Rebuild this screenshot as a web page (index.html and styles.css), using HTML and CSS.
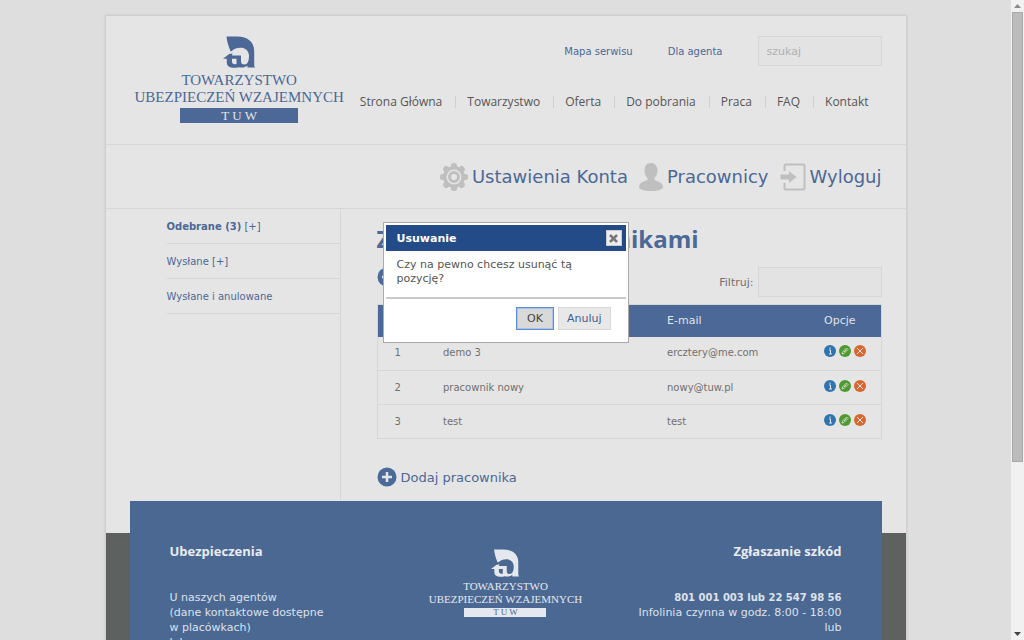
FILE: index.html
```html
<!DOCTYPE html>
<html lang="pl">
<head>
<meta charset="utf-8">
<title>Towarzystwo Ubezpieczeń Wzajemnych TUW</title>
<link rel="stylesheet" href="styles.css">
</head>
<body>
<svg class="defs" aria-hidden="true">
  <symbol id="mark" viewBox="0 0 32 32">
    <path d="M3.500 .5H14C25 .5 31.200 6 31.200 15V29.500L32 31.500H24.500L24.300 29.500C22 31.500 19 32 15.500 31.200C13 32 10 32 7 31.200C4.500 30.200 3.800 28.500 3.800 26V22.800H0L7.500 17V15C5.500 10.500 4 5.500 3.500 .5Z" fill="currentColor"/>
    <path class="mark-cut" d="M6.500 15.200H8.500C11 12.500 15 11.500 18.500 11.800C23.500 12.300 26 16 26 20C26 25 24.500 28.500 21.500 28.500C19 28.500 18 27.500 18 25V19.500H9L9.500 17.500L6.500 18ZM9 22.800H13.500V28C11 28.800 9 28 9 25.500Z"/>
  </symbol>
  <symbol id="plus" viewBox="0 0 20 20">
    <circle cx="10" cy="10" r="9.500" fill="#4b6a99"/><path d="M10 5V15M5 10H15" stroke="#e5e5e5" stroke-width="2.500"/>
  </symbol>
  <symbol id="info" viewBox="0 0 12 12">
    <circle cx="6" cy="6" r="6" fill="#2e75b0"/><path d="M5 5H6.500V9M5 9H8M6 2.500V4" stroke="#e5e5e5" fill="none"/>
  </symbol>
  <symbol id="edit" viewBox="0 0 12 12">
    <circle cx="6" cy="6" r="6" fill="#4e9a2e"/><path d="M3 9L3.500 7L7.500 3L9 4.500L5 8.500ZM5 7L7.500 4.500" stroke="#e5e5e5" stroke-width=".8" fill="none"/>
  </symbol>
  <symbol id="remove" viewBox="0 0 12 12">
    <circle cx="6" cy="6" r="6" fill="#d8662f"/><path d="M3 3L9 9M9 3L3 9" stroke="#e5e5e5" fill="none"/>
  </symbol>
</svg>
<div class="window">
  <div class="page">
    <div class="sheet">
      <header class="header">
        <a class="logo" href="#">
          <svg class="logo-mark"><use href="#mark"/></svg>
          <span class="logo-line">TOWARZYSTWO</span>
          <span class="logo-line">UBEZPIECZEŃ WZAJEMNYCH</span>
          <span class="logo-bar">T U W</span>
        </a>
        <div class="header-side">
          <div class="tools">
            <a href="#">Mapa serwisu</a>
            <a href="#">Dla agenta</a>
            <input class="field" type="text" placeholder="szukaj" aria-label="szukaj">
          </div>
          <nav class="nav">
            <a href="#">Strona Główna</a><a href="#">Towarzystwo</a><a href="#">Oferta</a><a href="#">Do pobrania</a><a href="#">Praca</a><a href="#">FAQ</a><a href="#">Kontakt</a>
          </nav>
        </div>
      </header>
      <nav class="account">
        <a href="#">
          <svg width="28" height="28" viewBox="0 0 28 28"><g fill="#bfbfbf"><circle cx="14" cy="14" r="11"/><g id="teeth"><rect x="11" y="0" width="6" height="28" rx="2.500"/><rect x="0" y="11" width="28" height="6" rx="2.500"/></g><use href="#teeth" transform="rotate(45 14 14)"/></g><circle cx="14" cy="14" r="7.500" fill="#e5e5e5"/><circle cx="14" cy="14" r="4.500" fill="none" stroke="#bfbfbf" stroke-width="3"/></svg>
          Ustawienia Konta</a>
        <a href="#">
          <svg width="24" height="28" viewBox="0 0 24 28"><path fill="#bfbfbf" d="M12 0C16.500 0 18.500 3.500 18.500 7.500C18.500 11 17 13.500 15.500 15V17C19 18.500 24 19.500 24 24C24 26.500 19 28 12 28S0 26.500 0 24C0 19.500 5 18.500 8.500 17V15C7 13.500 5.500 11 5.500 7.500C5.500 3.500 7.500 0 12 0Z"/></svg>
          Pracownicy</a>
        <a href="#">
          <svg width="26" height="28" viewBox="0 0 26 28"><path d="M4.500 8V3Q4.500 1.500 6 1.500H23Q24.500 1.500 24.500 3V25Q24.500 26.500 23 26.500H6Q4.500 26.500 4.500 25V20" fill="none" stroke="#bfbfbf" stroke-width="2"/><path d="M.5 11.500H9V8L16.500 14L9 20V16.500H.5Z" fill="#bfbfbf"/></svg>
          Wyloguj</a>
      </nav>
      <div class="columns">
        <nav class="side">
          <a href="#"><b>Odebrane (3)</b> [+]</a>
          <a href="#">Wysłane [+]</a>
          <a href="#">Wysłane i anulowane</a>
        </nav>
        <main class="main">
          <h1>Zarządzanie pracownikami</h1>
          <div class="bar">
            <a class="add" href="#"><svg width="20" height="20"><use href="#plus"/></svg>Dodaj pracownika</a>
            <label class="filter">Filtruj: <input class="field" type="text"></label>
          </div>
          <table class="staff">
            <thead><tr><th class="c-num">#</th><th>Login</th><th class="c-mail">E-mail</th><th class="c-opt">Opcje</th></tr></thead>
            <tbody>
              <tr><td>1</td><td>demo 3</td><td>ercztery@me.com</td><td><div class="opts"><button aria-label="Podgląd"><svg><use href="#info"/></svg></button><button aria-label="Edytuj"><svg><use href="#edit"/></svg></button><button aria-label="Usuń"><svg><use href="#remove"/></svg></button></div></td></tr>
              <tr><td>2</td><td>pracownik nowy</td><td>nowy@tuw.pl</td><td><div class="opts"><button aria-label="Podgląd"><svg><use href="#info"/></svg></button><button aria-label="Edytuj"><svg><use href="#edit"/></svg></button><button aria-label="Usuń"><svg><use href="#remove"/></svg></button></div></td></tr>
              <tr><td>3</td><td>test</td><td>test</td><td><div class="opts"><button aria-label="Podgląd"><svg><use href="#info"/></svg></button><button aria-label="Edytuj"><svg><use href="#edit"/></svg></button><button aria-label="Usuń"><svg><use href="#remove"/></svg></button></div></td></tr>
            </tbody>
          </table>
          <a class="add" href="#"><svg width="20" height="20"><use href="#plus"/></svg>Dodaj pracownika</a>
        </main>
      </div>
      <footer class="footer">
        <div class="footer-box">
          <section>
            <h2>Ubezpieczenia</h2>
            <p>U naszych agentów<br>(dane kontaktowe dostępne<br>w placówkach)<br>lub</p>
          </section>
          <a class="logo logo-small" href="#">
            <svg class="logo-mark"><use href="#mark"/></svg>
            <span class="logo-line">TOWARZYSTWO</span>
            <span class="logo-line">UBEZPIECZEŃ WZAJEMNYCH</span>
            <span class="logo-bar">T U W</span>
          </a>
          <section class="footer-right">
            <h2>Zgłaszanie szkód</h2>
            <p><b>801 001 003 lub 22 547 98 56</b><br>Infolinia czynna w godz. 8:00 - 18:00<br>lub</p>
          </section>
        </div>
      </footer>
    </div>
    <div class="dialog" role="dialog" aria-labelledby="dlg-title">
      <div class="dialog-title"><span id="dlg-title">Usuwanie</span><button class="close" aria-label="Zamknij"><svg width="9" height="9" viewBox="0 0 9 9"><path d="M1 1L8 8M8 1L1 8" stroke="#777" stroke-width="2.500"/></svg></button></div>
      <p class="dialog-text">Czy na pewno chcesz usunąć tą pozycję?</p>
      <div class="dialog-actions"><button class="btn btn-ok">OK</button><button class="btn">Anuluj</button></div>
    </div>
  </div>
  <div class="scroll" aria-hidden="true">
    <svg width="7" height="4" viewBox="0 0 7 4"><path d="M0 4L3.500 0L7 4Z" fill="#8a8a8a"/></svg>
    <div class="track"><div class="thumb"></div></div>
    <svg width="7" height="4" viewBox="0 0 7 4"><path d="M0 0L3.500 4L7 0Z" fill="#444"/></svg>
  </div>
</div>
</body>
</html>
```
FILE: styles.css
```css
* { box-sizing: border-box; }
body {
  margin: 0;
  background: #dedede;
  color: #707070;
  font: 11px/15px "DejaVu Sans", Verdana, sans-serif;
}
a { color: #4b6896; text-decoration: none; }
button { font: inherit; cursor: pointer; }
.defs { display: none; }
.window { display: flex; height: 100vh; overflow: hidden; }
.page { position: relative; flex: 1; overflow: hidden; padding-top: 16px; }
.sheet {
  max-width: 800px;
  margin: 0 auto;
  background: #e5e5e5;
  box-shadow: 0 0 2px 1px #c8c8c8;
}

.header {
  display: flex;
  justify-content: space-between;
  padding: 20px 24px 21px 29px;
  border-bottom: 1px solid #d6d6d6;
}
.logo {
  --cut: #e5e5e5;
  display: flex;
  flex-direction: column;
  align-items: center;
  color: #4b6896;
  font: 15px/17px "Liberation Serif", serif;
  white-space: nowrap;
}
.logo-mark { width: 32px; height: 32px; margin-bottom: 4px; }
.mark-cut { fill: var(--cut); }
.logo-bar {
  width: 118px;
  height: 15px;
  margin-top: 2px;
  background: #4b6896;
  color: #e5e5e5;
  font-size: 13px;
  line-height: 15px;
  text-align: center;
}
.header-side { display: flex; flex-direction: column; align-items: flex-end; }
.tools { display: flex; align-items: center; gap: 35px; font-size: 10px; }
.field {
  width: 124px;
  height: 30px;
  padding: 0 8px;
  border: 1px solid #d6d6d6;
  background: #e3e3e3;
  font: 11px "DejaVu Sans", Verdana, sans-serif;
}
.field::placeholder { color: #b0b0b0; }
.nav { display: flex; margin-top: 26px; font: 12px/20px "Open Sans", sans-serif; white-space: nowrap; }
.nav a { position: relative; padding: 0 13px 0 12px; color: #555; }
.nav a + a::before {
  content: "";
  position: absolute;
  left: 0;
  top: 4px;
  height: 12px;
  border-left: 1px solid #cfcfcf;
}

.account {
  display: flex;
  justify-content: flex-end;
  gap: 11px;
  padding: 18px 24px 17px;
  border-bottom: 1px solid #d6d6d6;
  font-size: 18px;
  line-height: 28px;
}
.account a { display: flex; align-items: center; gap: 4px; }

.columns { display: flex; height: 324px; }
.side { width: 235px; padding-left: 61px; border-right: 1px solid #d6d6d6; font-size: 10px; }
.side a { display: block; padding: 10px 0 9px; border-bottom: 1px solid #d6d6d6; }
.main { flex: 1; padding: 12px 24px 0 36px; }
h1 { margin: 0; color: #4b6896; font: bold 24px/36px "Open Sans", sans-serif; }
.bar { display: flex; justify-content: space-between; margin: 10px 0 7px; }
.add { display: flex; align-items: center; gap: 4px; height: 20px; font-size: 13px; }
.filter { display: flex; align-items: center; gap: 4px; }
.staff {
  width: 100%;
  border-collapse: collapse;
  margin-bottom: 28px;
  border: 1px solid #d6d6d6;
  table-layout: fixed;
}
.staff th {
  height: 32px;
  padding: 0;
  background: #4b6896;
  color: #e0e4ea;
  font-weight: normal;
  text-align: left;
}
.staff td { height: 34px; padding: 0 0 1px; border-bottom: 1px solid #d6d6d6; font-size: 10px; }
.staff th:first-child, .staff td:first-child { padding-left: 17px; }
.c-num { width: 66px; }
.c-mail { width: 157px; }
.c-opt { width: 57px; }
.opts { display: flex; gap: 3px; margin-bottom: 3px; }
.opts button { width: 12px; height: 12px; padding: 0; border: 0; background: none; }
.opts svg { display: block; width: 12px; height: 12px; }

.footer { display: flow-root; background: #5d6160; padding: 0 24px; }
.footer-box {
  position: relative;
  display: grid;
  grid-template-columns: 1fr auto 1fr;
  margin-top: -32px;
  padding: 40px;
  background: #4b6893;
  color: #dde2ea;
}
.footer h2 { margin: 0 0 29px; color: #e8ebf0; font: bold 13px/20px "Open Sans", sans-serif; }
.footer p { margin: 0; white-space: nowrap; }
.footer b { font-size: 10px; }
.footer-right { text-align: right; }
.logo-small { --cut: #4b6893; margin-top: 8px; color: #e5e8ee; font-size: 11px; line-height: 13px; }
.logo-small .logo-mark { width: 28px; height: 28px; margin-bottom: 3px; }
.logo-small .logo-bar { width: 82px; height: 9px; background: #e5e8ee; color: #4b6893; font-size: 9px; line-height: 9px; }

.dialog {
  position: absolute;
  top: 222px;
  left: 0;
  right: 0;
  width: 246px;
  margin: 0 auto;
  padding: 2px;
  border: 1px solid #aaa;
  background: #fff;
  color: #555;
}
.dialog-title {
  display: flex;
  align-items: center;
  justify-content: space-between;
  height: 26px;
  padding: 0 4px 0 11px;
  background: #224b87;
  color: #fff;
  font-weight: bold;
}
.close {
  display: grid;
  place-items: center;
  width: 16px;
  height: 16px;
  padding: 0;
  border: 1px solid #ccc;
  background: #eee;
}
.dialog-text { margin: 0; padding: 7px 40px 11px 11px; line-height: 14px; }
.dialog-actions {
  display: flex;
  justify-content: flex-end;
  gap: 4px;
  padding: 8px 15px 10px;
  border-top: 2px solid #c9c9c9;
}
.btn { height: 23px; padding: 0 8px; border: 1px solid #d9d9d9; background: #e8e8e8; color: #3f5f92; }
.btn-ok { padding: 0 10px; border: 1px solid #5b8bd0; background: #d9d9d9; color: #444; outline: 1px solid #a9c3ea; outline-offset: -2px; }

.scroll {
  display: flex;
  flex-direction: column;
  align-items: center;
  gap: 4px;
  width: 13px;
  padding: 4px 0;
  background: #f1f1f1;
}
.track { flex: 1; align-self: stretch; padding: 0 1px; }
.thumb { height: 73%; border: 1px solid #a8a8a8; background: #bcbcbc; }
```
